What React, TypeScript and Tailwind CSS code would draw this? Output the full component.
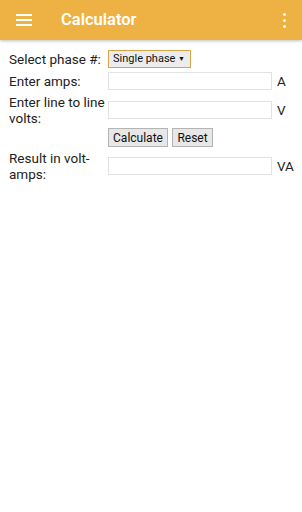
import React from 'react';

const font = { fontFamily: 'Roboto, "Liberation Sans", sans-serif' };

function Field({ unit }: { unit?: string }) {
  return (
    <>
      <div className="flex items-center">
        <div className="h-[18px] w-[164px] border border-[#e2e2e2] bg-white" />
      </div>
      <div className="flex items-center pl-[5px] text-[#222]">{unit}</div>
    </>
  );
}

export default function App() {
  return (
    <div className="relative h-[512px] w-[302px] overflow-hidden bg-white" style={font}>
      <header className="flex h-10 items-center bg-[#eeb144] shadow-[0_1px_3px_rgba(0,0,0,0.25)]">
        <div className="ml-4 flex w-4 flex-col gap-[3px]">
          <span className="h-[2px] w-4 bg-white" />
          <span className="h-[2px] w-4 bg-white" />
          <span className="h-[2px] w-4 bg-white" />
        </div>
        <h1 className="ml-[29px] text-[16.5px] font-semibold text-white">Calculator</h1>
        <div className="ml-auto mr-4 flex flex-col items-center gap-[3px]">
          <span className="h-[3px] w-[3px] rounded-full bg-white" />
          <span className="h-[3px] w-[3px] rounded-full bg-white" />
          <span className="h-[3px] w-[3px] rounded-full bg-white" />
        </div>
      </header>

      <div className="grid grid-cols-[99px_164px_auto] gap-y-[4px] pl-[9px] pt-[10px] text-[13.5px] leading-[16px] text-[#222]">
        {/* phase */}
        <div className="flex items-center whitespace-nowrap">Select phase #:</div>
        <div className="col-span-2 flex items-center">
          <div className="flex h-[18px] w-[83px] items-center justify-between whitespace-nowrap border border-[#d7a548] bg-[#ececec] pl-[4px] pr-[5px] text-[11px] text-[#111]">
            <span>Single phase</span>
            <span className="text-[7px]">▼</span>
          </div>
        </div>

        {/* amps */}
        <div className="flex items-center">Enter amps:</div>
        <Field unit="A" />

        {/* volts */}
        <div>Enter line to line volts:</div>
        <Field unit="V" />

        {/* buttons */}
        <div />
        <div className="col-span-2 -mt-[2px] flex gap-[4px]">
          <button className="h-[19px] w-[60px] border border-[#b4b4b4] bg-[#e7e7e7] text-[12px] text-[#111]">Calculate</button>
          <button className="h-[19px] w-[41px] border border-[#b4b4b4] bg-[#e7e7e7] text-[12px] text-[#111]">Reset</button>
        </div>

        {/* result */}
        <div className="-mt-[1px]">Result in volt-amps:</div>
        <div className="-mt-[1px] flex items-center">
          <div className="h-[18px] w-[164px] border border-[#e2e2e2] bg-white" />
        </div>
        <div className="-mt-[1px] flex items-center pl-[5px] text-[#222]">VA</div>
      </div>
    </div>
  );
}
